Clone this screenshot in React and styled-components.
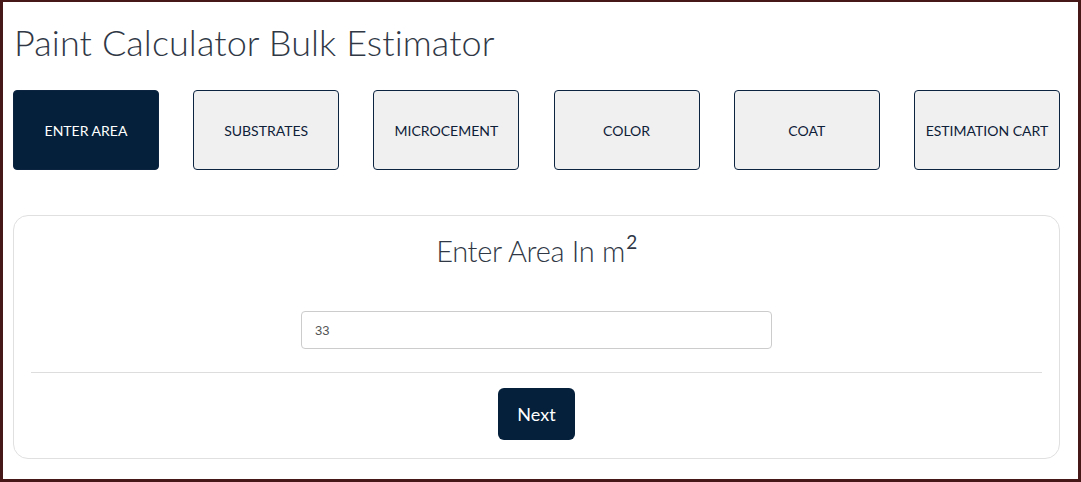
import React, { useState } from 'react';
import styled, { createGlobalStyle } from 'styled-components';

const GlobalStyle = createGlobalStyle`
  html, body {
    margin: 0;
    padding: 0;
    background: #fff;
  }
  * { box-sizing: border-box; }
`;

const tabs = ['Enter Area', 'Substrates', 'Microcement', 'Color', 'Coat', 'Estimation Cart'];

function App() {
    const [active, setActive] = useState(0);
    const [area, setArea] = useState('33');

    return (
        <PageStyled>
            <GlobalStyle />
            <Title>Paint Calculator Bulk Estimator</Title>
            <TabRow>
                {tabs.map((t, i) => (
                    <Tab key={t} $active={i === active} onClick={() => setActive(i)}>
                        {t}
                    </Tab>
                ))}
            </TabRow>
            <Card>
                <CardTitle>Enter Area In m<sup>2</sup></CardTitle>
                <Field>
                    <AreaInput value={area} onChange={e => setArea(e.target.value)} />
                </Field>
                <Divider />
                <Actions>
                    <NextButton>Next</NextButton>
                </Actions>
            </Card>
        </PageStyled>
    );
}

const PageStyled = styled.div`
    width: 1081px;
    height: 482px;
    border: 3px solid #461818;
    border-top-width: 2px;
    padding: 0 18px 0 10px;
    font-family: Lato, "Open Sans", sans-serif;
    overflow: hidden;
`;

const Title = styled.h1`
    margin: 0;
    padding-top: 17px;
    font-size: 36px;
    line-height: 46px;
    font-weight: 300;
    letter-spacing: 0.1px;
    color: #303846;
    padding-left: 1px;
`;

const TabRow = styled.div`
    display: flex;
    justify-content: space-between;
    margin-top: 25px;
`;

const Tab = styled.button`
    width: 146px;
    height: 80px;
    border: 1px solid #0c2440;
    border-radius: 4px;
    background: ${p => (p.$active ? '#04203b' : '#f0f0f0')};
    color: ${p => (p.$active ? '#fff' : '#0e2038')};
    font-family: Lato, "Open Sans", sans-serif;
    font-size: 14px;
    letter-spacing: 0;
    text-transform: uppercase;
    cursor: pointer;
    padding: 0;
`;

const Card = styled.div`
    margin-top: 45px;
    border: 1px solid #e0e0e0;
    border-radius: 15px;
    padding: 18px 17px 18px;
`;

const CardTitle = styled.h2`
    margin: 0;
    text-align: center;
    font-size: 29px;
    line-height: 34px;
    font-weight: 300;
    color: #303846;
    letter-spacing: -0.3px;

    sup {
        font-size: 19px;
        font-weight: 400;
        line-height: 0;
        position: relative;
        top: -2px;
        margin-left: 1px;
    }
`;

const Field = styled.div`
    display: flex;
    justify-content: center;
    margin-top: 43px;
`;

const AreaInput = styled.input`
    width: 471px;
    height: 38px;
    border: 1px solid #ccc;
    border-radius: 4px;
    padding: 0 13px;
    font-family: "Liberation Sans", Arial, sans-serif;
    font-size: 13px;
    color: #555;
    outline: none;
`;

const Divider = styled.hr`
    margin: 23px 0 15px;
    border: 0;
    border-top: 1px solid #ddd;
`;

const Actions = styled.div`
    display: flex;
    justify-content: center;
`;

const NextButton = styled.button`
    width: 77px;
    height: 52px;
    border: 0;
    border-radius: 6px;
    background: #04203b;
    color: #fff;
    font-family: Lato, "Open Sans", sans-serif;
    font-size: 18px;
    cursor: pointer;
`;

export default App
